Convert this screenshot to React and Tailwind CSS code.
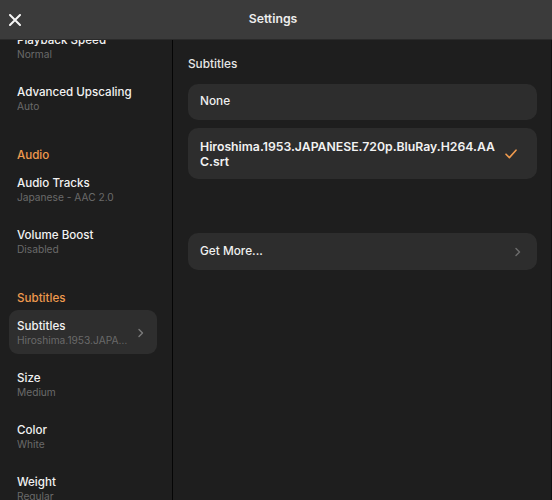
import React from "react";

const font = { fontFamily: "Inter, 'Noto Sans', sans-serif" };

function Item({ title, sub, selected }) {
  return (
    <div
      className={`mb-2 flex h-[44px] shrink-0 items-start rounded-[9px] px-2 pt-[9px] ${
        selected ? "bg-[#2e2e2e]" : ""
      }`}
    >
      <div className="flex min-w-0 flex-1 flex-col">
        <div className="text-[11.6px] font-medium leading-[14px] text-[#f2f2f2]">{title}</div>
        <div className="truncate text-[10.2px] leading-[14px] text-[#6a6a6a]">{sub}</div>
      </div>
      {selected && (
        <svg width="8" height="10" viewBox="0 0 8 10" className="mt-[9px] ml-2 mr-[4px] shrink-0">
          <path d="M2 1.5 L5.5 5 L2 8.5" fill="none" stroke="#7a7a7a" strokeWidth="1.4" strokeLinecap="round" strokeLinejoin="round" />
        </svg>
      )}
    </div>
  );
}

function Header({ children }) {
  return (
    <div className="shrink-0 px-2 pt-[19px] pb-[4px] text-[11.6px] font-medium leading-4 text-[#ef9a4e]">
      {children}
    </div>
  );
}

export default function App() {
  return (
    <div style={font} className="relative flex h-[500px] w-[552px] flex-col overflow-hidden bg-[#1e1e1e]">
      <div className="relative z-10 flex h-[40px] shrink-0 items-center border-b border-[#2a2a2a] bg-[#3b3b3b]">
        <svg width="12" height="12" viewBox="0 0 12 12" className="ml-[9px] shrink-0">
          <path d="M1 1 L11 11 M11 1 L1 11" stroke="#f5f5f5" strokeWidth="2" strokeLinecap="round" />
        </svg>
        <div className="flex flex-1 justify-center pr-[27px] text-[12.25px] font-semibold text-[#ededed]">Settings</div>
      </div>
      <div className="flex min-h-0 flex-1">
        <div className="w-[173px] shrink-0 overflow-hidden border-r border-[#050505] bg-[#1e1e1e]">
          <div className="-mt-[16px] flex flex-col pl-[9px] pr-[15px]">
            <Item title="Playback Speed" sub="Normal" />
            <Item title="Advanced Upscaling" sub="Auto" />
            <Header>Audio</Header>
            <Item title="Audio Tracks" sub="Japanese - AAC 2.0" />
            <Item title="Volume Boost" sub="Disabled" />
            <Header>Subtitles</Header>
            <Item title="Subtitles" sub="Hiroshima.1953.JAPANESE.720p.BluRay.H264.AAC.srt" selected />
            <Item title="Size" sub="Medium" />
            <Item title="Color" sub="White" />
            <Item title="Weight" sub="Regular" />
          </div>
        </div>
        <div className="flex min-w-0 flex-1 flex-col border-r border-[#111] pl-[15px] pr-[14px] pt-[16px]">
          <div className="text-[11.8px] font-medium leading-4 text-[#e6e6e6]">Subtitles</div>
          <div className="mt-[12px] flex h-[36px] items-center rounded-[10px] bg-[#2d2d2d] px-3 text-[11.8px] font-medium text-[#f0f0f0]">
            None
          </div>
          <div className="mt-[8px] flex h-[51px] items-center rounded-[10px] bg-[#2d2d2d] pl-3 pr-[20px]">
            <div className="flex-1 text-[12.25px] font-semibold leading-[15px] text-[#f2f2f2]">
              <div className="whitespace-nowrap">Hiroshima.1953.JAPANESE.720p.BluRay.H264.AA</div>
              <div className="whitespace-nowrap">C.srt</div>
            </div>
            <svg width="12" height="10" viewBox="0 0 12 10" className="shrink-0">
              <path d="M1 5.2 L4.4 8.6 L11 1.2" fill="none" stroke="#ef9a4e" strokeWidth="1.6" strokeLinecap="round" strokeLinejoin="round" />
            </svg>
          </div>
          <div className="mt-[54px] flex h-[37px] items-center rounded-[10px] bg-[#2d2d2d] pl-3 pr-[15px]">
            <div className="flex-1 text-[11.8px] font-medium text-[#f0f0f0]">Get More...</div>
            <svg width="8" height="10" viewBox="0 0 8 10" className="shrink-0">
              <path d="M2 1.5 L5.5 5 L2 8.5" fill="none" stroke="#6e6e6e" strokeWidth="1.4" strokeLinecap="round" strokeLinejoin="round" />
            </svg>
          </div>
        </div>
      </div>
    </div>
  );
}
